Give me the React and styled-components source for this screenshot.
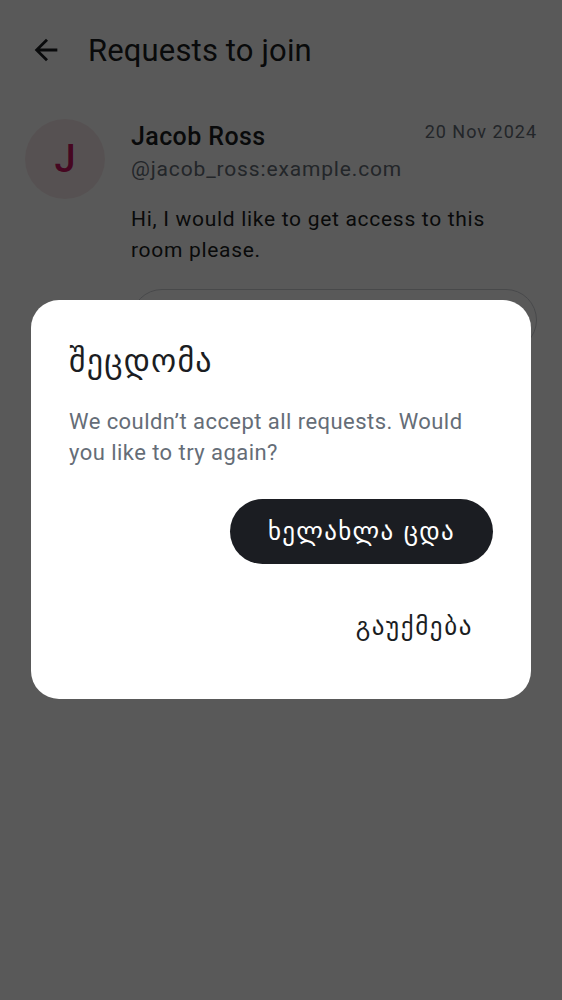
import React from 'react'
import styled, { createGlobalStyle } from 'styled-components'

const GlobalStyle = createGlobalStyle`
  html, body {
    margin: 0;
    padding: 0;
    background: #ffffff;
  }
  body {
    font-family: Roboto, 'Noto Sans', 'DejaVu Sans', sans-serif;
    color: #1b1d22;
  }
  * {
    box-sizing: border-box;
  }
`

const BackIcon = () => (
  <svg width='34' height='34' viewBox='0 0 24 24' aria-hidden='true'>
    <path
      fill='currentColor'
      d='M20 11H7.83l5.59-5.59L12 4l-8 8 8 8 1.41-1.41L7.83 13H20v-2z'
    />
  </svg>
)

const App = () => {
  return (
    <>
      <GlobalStyle />
      <Screen>
        <TopBar>
          <BackButton type='button'>
            <BackIcon />
          </BackButton>
          <Title>Requests to join</Title>
        </TopBar>

        <RequestRow>
          <Avatar>J</Avatar>
          <RequestBody>
            <NameLine>
              <Name>Jacob Ross</Name>
              <Date>20 Nov 2024</Date>
            </NameLine>
            <Handle>@jacob_ross:example.com</Handle>
            <Message>Hi, I would like to get access to this room please.</Message>
            <Actions>
              <OutlineButton type='button'>View</OutlineButton>
            </Actions>
          </RequestBody>
        </RequestRow>
      </Screen>

      <Scrim>
        <Dialog role='dialog'>
          <DialogTitle>შეცდომა</DialogTitle>
          <DialogText>
            We couldn’t accept all requests. Would you like to try again?
          </DialogText>
          <DialogButtons>
            <PrimaryButton type='button'>ხელახლა ცდა</PrimaryButton>
            <TextButton type='button'>გაუქმება</TextButton>
          </DialogButtons>
        </Dialog>
      </Scrim>
    </>
  )
}

const Screen = styled.div`
  width: 562px;
  min-height: 1000px;
  background: #ffffff;
`

const TopBar = styled.header`
  height: 100px;
  display: flex;
  align-items: center;
  padding: 0 0 0 24px;
  gap: 20px;
`

const BackButton = styled.button`
  width: 44px;
  height: 44px;
  padding: 0;
  border: none;
  background: transparent;
  color: #1b1d22;
  display: flex;
  align-items: center;
  justify-content: center;
`

const Title = styled.h1`
  margin: 0;
  font-size: 31px;
  font-weight: 400;
  letter-spacing: 0.15px;
  color: #1b1d22;
`

const RequestRow = styled.div`
  display: flex;
  gap: 26px;
  padding: 19px 25px 0 25px;
`

const Avatar = styled.div`
  flex: none;
  width: 80px;
  height: 80px;
  border-radius: 50%;
  background: #f7e9eb;
  color: #c8145f;
  display: flex;
  align-items: center;
  justify-content: center;
  font-size: 38px;
  font-weight: 500;
`

const RequestBody = styled.div`
  flex: 1;
  display: flex;
  flex-direction: column;
`

const NameLine = styled.div`
  display: flex;
  justify-content: space-between;
  align-items: flex-start;
`

const Name = styled.span`
  font-size: 25px;
  font-weight: 500;
  line-height: 35px;
  letter-spacing: 0.4px;
  color: #1b1d22;
`

const Date = styled.span`
  font-size: 18px;
  line-height: 26px;
  letter-spacing: 1px;
  color: #656d77;
`

const Handle = styled.div`
  font-size: 21px;
  line-height: 30px;
  letter-spacing: 0.85px;
  color: #656d77;
`

const Message = styled.p`
  margin: 20px 0 0;
  font-size: 21px;
  line-height: 31px;
  letter-spacing: 0.7px;
  color: #1b1d22;
`

const Actions = styled.div`
  margin-top: 23px;
  display: flex;
`

const OutlineButton = styled.button`
  flex: 1;
  height: 62px;
  border-radius: 31px;
  border: 1.5px solid #cdd0d5;
  background: #ffffff;
  font-family: inherit;
  font-size: 22px;
  color: #1b1d22;
`

const Scrim = styled.div`
  position: fixed;
  inset: 0;
  background: rgba(0, 0, 0, 0.65);
  display: flex;
  justify-content: center;
  align-items: flex-start;
  padding-top: 300px;
`

const Dialog = styled.div`
  width: 500px;
  height: 399px;
  background: #ffffff;
  border-radius: 28px;
  padding: 39px 38px 0;
  display: flex;
  flex-direction: column;
`

const DialogTitle = styled.h2`
  margin: 0;
  font-family: 'DejaVu Sans', sans-serif;
  font-size: 32px;
  font-weight: 400;
  line-height: 44px;
  letter-spacing: 1.2px;
  color: #1b1d22;
`

const DialogText = styled.p`
  margin: 23px 0 0;
  font-size: 22px;
  line-height: 31px;
  letter-spacing: 0.45px;
  color: #656d77;
`

const DialogButtons = styled.div`
  margin-top: 31px;
  display: flex;
  flex-direction: column;
  align-items: flex-end;
  gap: 30px;
`

const PrimaryButton = styled.button`
  height: 65px;
  padding: 0 38px;
  border: none;
  border-radius: 33px;
  background: #1b1d22;
  color: #ffffff;
  font-family: 'DejaVu Sans', sans-serif;
  font-size: 25px;
  letter-spacing: 1.3px;
`

const TextButton = styled.button`
  height: 65px;
  padding: 0 20px;
  border: none;
  background: transparent;
  color: #1b1d22;
  font-family: 'DejaVu Sans', sans-serif;
  font-size: 25px;
  letter-spacing: 1.6px;
`

export default App
